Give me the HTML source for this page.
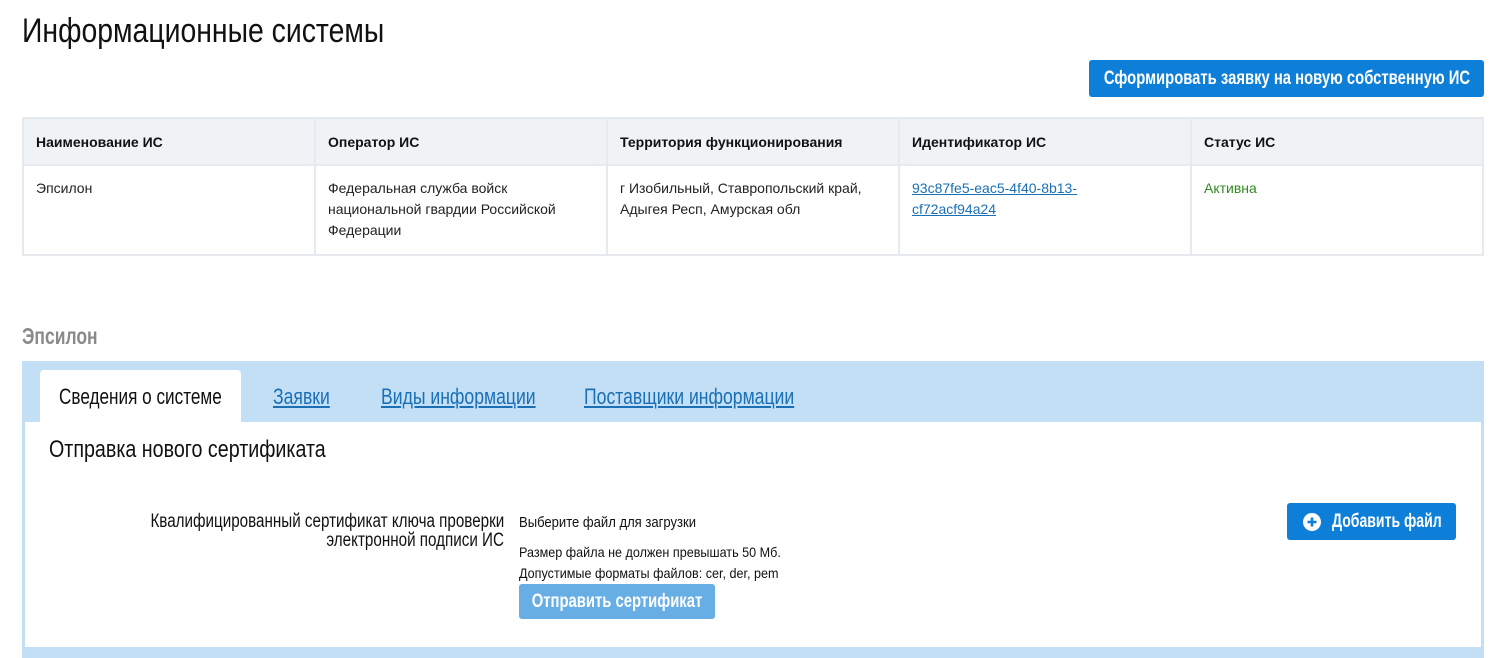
<!DOCTYPE html>
<html><head><meta charset="utf-8"><style>
*{margin:0;padding:0;box-sizing:border-box}
body{width:1498px;height:658px;overflow:hidden;background:#fff;font-family:"Liberation Sans",sans-serif;color:#1a1a1a;position:relative}
.a{position:absolute;white-space:nowrap}
.c{display:inline-block;transform:scaleX(.8);transform-origin:left center;white-space:nowrap}
.cc{position:absolute;left:50%;top:0;transform:translateX(-50%) scaleX(.78);white-space:nowrap}
.cr{display:inline-block;transform:scaleX(.8);transform-origin:right center;white-space:nowrap}
.u{text-decoration:underline;color:#1a6fb5}
.btn{position:absolute;background:#0d7fd8;border-radius:3px;color:#fff;font-weight:bold;white-space:nowrap}
table{position:absolute;left:22px;top:117px;width:1462px;border-collapse:collapse;font-size:14px}
td,th{border:2px solid #e6e9ed;vertical-align:top;text-align:left;padding:0 12px;width:292px}
th{background:#f0f3f6;height:47px;vertical-align:middle;font-weight:bold;font-size:14px;color:#111}
td{height:90px;padding-top:12px;line-height:21px;color:#222}
a{color:#1a6fb5}
</style></head><body>
<div class="a" style="left:22px;top:12px;font-size:34px;color:#111"><span class="c" style="transform:scaleX(.835)">Информационные системы</span></div>
<div class="btn" style="left:1089px;top:60px;width:395px;height:37px;line-height:37px;font-size:19px"><span class="cc">Сформировать заявку на новую собственную ИС</span></div>
<table><tr><th>Наименование ИС</th><th>Оператор ИС</th><th>Территория функционирования</th><th>Идентификатор ИС</th><th>Статус ИС</th></tr>
<tr><td>Эпсилон</td><td>Федеральная служба войск национальной гвардии Российской Федерации</td><td>г Изобильный, Ставропольский край, Адыгея Респ, Амурская обл</td><td><a href="#">93c87fe5-eac5-4f40-8b13-<br>cf72acf94a24</a></td><td style="color:#2e8b1e">Активна</td></tr></table>
<div class="a" style="left:22px;top:323px;font-size:23px;color:#8a8a8a;font-weight:bold"><span class="c" style="transform:scaleX(.76)">Эпсилон</span></div>
<div class="a" style="left:22px;top:361px;width:1462px;height:297px;background:#c2dff5"></div>
<div class="a" style="left:25px;top:422px;width:1456px;height:225px;background:#fff"></div>
<div class="a" style="left:25px;top:648px;width:1456px;height:10px;background:#c2dff5;border-radius:4px 4px 0 0"></div>
<div class="a" style="left:40px;top:370px;width:201px;height:53px;background:#fff;border-radius:4px 4px 0 0"></div>
<div class="a" style="left:59px;top:384px;font-size:22px;color:#111"><span class="c" style="transform:scaleX(.78)">Сведения о системе</span></div>
<div class="a" style="left:273px;top:384px;font-size:22px"><span class="c u">Заявки</span></div>
<div class="a" style="left:381px;top:384px;font-size:22px"><span class="c u">Виды информации</span></div>
<div class="a" style="left:584px;top:384px;font-size:22px"><span class="c u">Поставщики информации</span></div>
<div class="a" style="left:49px;top:436px;font-size:24px;color:#111"><span class="c" style="transform:scaleX(.82)">Отправка нового сертификата</span></div>
<div class="a" style="right:994px;top:512px;font-size:19px;text-align:right;line-height:19px;color:#111"><span class="cr">Квалифицированный сертификат ключа проверки</span><br><span class="cr">электронной подписи ИС</span></div>
<div class="a" style="left:519px;top:514px;font-size:15px;color:#111"><span class="c" style="transform:scaleX(.87)">Выберите файл для загрузки</span></div>
<div class="a" style="left:519px;top:544px;font-size:14px;color:#111"><span class="c" style="transform:scaleX(.9)">Размер файла не должен превышать 50 Мб.</span></div>
<div class="a" style="left:519px;top:565px;font-size:14px;color:#111"><span class="c" style="transform:scaleX(.9)">Допустимые форматы файлов: cer, der, pem</span></div>
<div class="btn" style="left:519px;top:584px;width:196px;height:35px;line-height:35px;font-size:19px;background:#66aee4"><span class="cc">Отправить сертификат</span></div>
<div class="btn" style="left:1287px;top:503px;width:169px;height:37px;line-height:37px;font-size:19px">
<svg style="position:absolute;left:16px;top:10px" width="18" height="18" viewBox="0 0 18 18"><circle cx="9" cy="9" r="9" fill="#fff"/><path d="M9 4.5v9M4.5 9h9" stroke="#0d7fd8" stroke-width="2.6"/></svg>
<span class="c" style="position:absolute;left:45px;transform:scaleX(.74)">Добавить файл</span></div>
</body></html>
